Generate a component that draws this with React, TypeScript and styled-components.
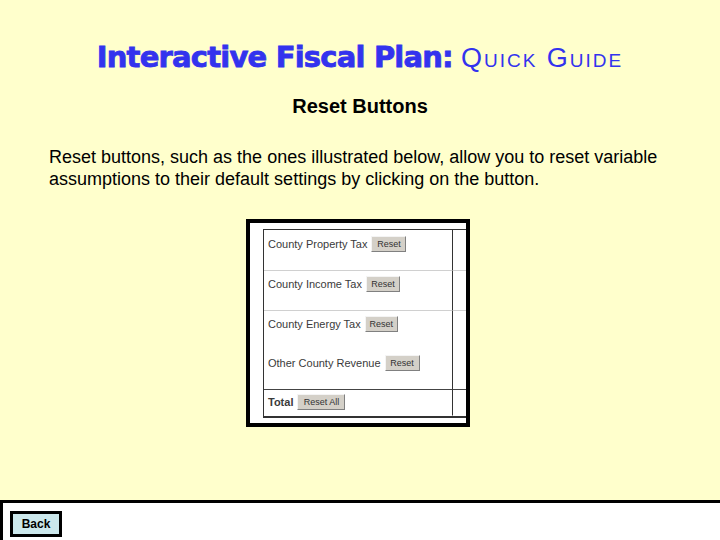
import React from "react";
import styled, { createGlobalStyle } from "styled-components";

const GlobalStyle = createGlobalStyle`
  html, body {
    margin: 0;
    padding: 0;
    background: #ffffcc;
  }
  body {
    font-family: "Liberation Sans", Arial, sans-serif;
    overflow: hidden;
  }
`;

const Page = styled.div`
  display: flex;
  flex-direction: column;
  width: 720px;
  height: 540px;
  background: #ffffcc;
`;

const Main = styled.main`
  flex: 1;
  display: flex;
  flex-direction: column;
`;

const Title = styled.h1`
  margin: 36px 0 0;
  text-align: center;
  font-weight: normal;
  line-height: 40px;
  white-space: nowrap;
`;

const Brand = styled.span`
  font-family: "DejaVu Sans", Verdana, sans-serif;
  font-weight: bold;
  font-size: 29px;
  letter-spacing: -0.8px;
  -webkit-text-stroke: 0.8px #3333ee;
  color: #3333ee;
`;

const Guide = styled.span`
  font-family: "Liberation Sans", Arial, sans-serif;
  font-variant: small-caps;
  font-size: 27px;
  letter-spacing: 2px;
  color: #3333ee;
  margin-left: 8px;
`;

const Heading = styled.h2`
  margin: 16px 0 0;
  text-align: center;
  font-size: 20px;
  font-weight: bold;
  color: #000;
  line-height: 24px;
`;

const Intro = styled.p`
  margin: 28px 0 0 49px;
  width: 625px;
  font-size: 18px;
  line-height: 22px;
  color: #000;
`;

const Figure = styled.div`
  margin: 29px 0 0 246px;
  width: 216px;
  height: 200px;
  border: 4px solid #000;
  background: #fff;
  overflow: hidden;
`;

const Table = styled.div`
  margin: 6px 0 0 13px;
  width: 230px;
  display: grid;
  grid-template-columns: 188px 1fr;
  border-top: 1px solid #333;
  border-left: 1px solid #333;
  border-bottom: 2px solid #333;
`;

const Cell = styled.div<{ $h: number; $line?: string; $tall?: boolean }>`
  height: ${(p) => p.$h}px;
  box-sizing: border-box;
  border-bottom: 1px solid ${(p) => p.$line || "transparent"};
  display: flex;
  flex-direction: column;
  gap: 23px;
  padding: ${(p) => (p.$tall ? "6px" : "5px")} 0 0 4px;
`;

const Side = styled.div<{ $h: number; $line?: string }>`
  height: ${(p) => p.$h}px;
  box-sizing: border-box;
  border-left: 1px solid #333;
  border-bottom: 1px solid ${(p) => p.$line || "transparent"};
`;

const Line = styled.div`
  display: flex;
  align-items: center;
  gap: 4px;
  height: 16px;
  font-size: 11px;
  color: #3a3a3a;
  white-space: nowrap;
`;

const Label = styled.span<{ $bold?: boolean }>`
  font-weight: ${(p) => (p.$bold ? "bold" : "normal")};
`;

const ResetBtn = styled.span<{ $w: number }>`
  display: inline-flex;
  align-items: center;
  justify-content: center;
  width: ${(p) => p.$w}px;
  height: 16px;
  box-sizing: border-box;
  background: #d4d0c8;
  border-top: 1px solid #f4f4f4;
  border-left: 1px solid #f4f4f4;
  border-right: 1px solid #808080;
  border-bottom: 1px solid #808080;
  font-size: 9px;
  color: #333;
`;

const Footer = styled.footer`
  height: 40px;
  box-sizing: border-box;
  background: #fff;
  border-top: 3px solid #000;
  border-left: 3px solid #000;
  padding: 8px 0 0 7px;
`;

const BackButton = styled.button`
  width: 52px;
  height: 26px;
  box-sizing: border-box;
  border: 3px solid #000;
  background: #cce8ec;
  font-family: "Liberation Sans", Arial, sans-serif;
  font-weight: bold;
  font-size: 12px;
  color: #000;
  padding: 0;
  cursor: pointer;
`;

const rows = [
  { h: 41, line: "#d0d0d0", items: [{ label: "County Property Tax", w: 35 }] },
  { h: 40, line: "#d0d0d0", items: [{ label: "County Income Tax", w: 34 }] },
  {
    h: 79,
    line: "#444",
    items: [
      { label: "County Energy Tax", w: 33 },
      { label: "Other County Revenue", w: 35 },
    ],
  },
];

export default function App() {
  return (
    <Page>
      <GlobalStyle />
      <Main>
        <Title>
          <Brand>Interactive Fiscal Plan:</Brand>
          <Guide>Quick Guide</Guide>
        </Title>
        <Heading>Reset Buttons</Heading>
        <Intro>
          Reset buttons, such as the ones illustrated below, allow you to reset
          variable assumptions to their default settings by clicking on the
          button.
        </Intro>
        <Figure>
          <Table>
            {rows.map((r, i) => (
              <React.Fragment key={i}>
                <Cell $h={r.h} $line={r.line} $tall={i === 0}>
                  {r.items.map((it) => (
                    <Line key={it.label}>
                      <Label>{it.label}</Label>
                      <ResetBtn $w={it.w}>Reset</ResetBtn>
                    </Line>
                  ))}
                </Cell>
                <Side $h={r.h} $line={r.line} />
              </React.Fragment>
            ))}
            <Cell $h={26}>
              <Line style={{ marginTop: "-1px" }}>
                <Label $bold>Total</Label>
                <ResetBtn $w={48}>Reset All</ResetBtn>
              </Line>
            </Cell>
            <Side $h={26} />
          </Table>
        </Figure>
      </Main>
      <Footer>
        <BackButton>Back</BackButton>
      </Footer>
    </Page>
  );
}
